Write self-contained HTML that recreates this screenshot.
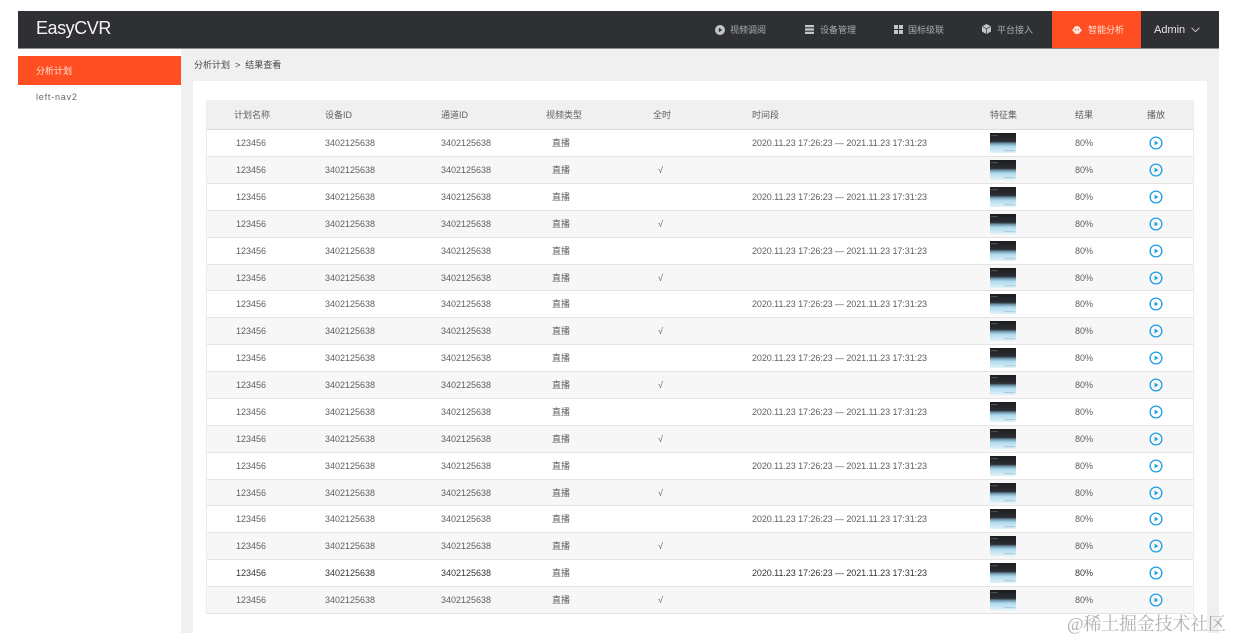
<!DOCTYPE html>
<html lang="zh">
<head>
<meta charset="utf-8">
<title>EasyCVR</title>
<style>
*{box-sizing:border-box;margin:0;padding:0}
html,body{width:1233px;height:640px;overflow:hidden;background:#fff}
body{font-family:"Liberation Sans","Noto Sans CJK SC",sans-serif;font-size:9px;color:#5f5f5f;position:relative}
#wrap{position:absolute;left:0;top:0;width:1233px;height:640px;filter:blur(.3px)}
.abs{position:absolute}
#head{left:18px;top:11px;width:1201px;height:38px;background:#2e3033;border-bottom:1px solid #8d8e8f}
#logo{left:36px;top:17px;font-size:18px;line-height:22px;color:#f4f4f4;letter-spacing:-.45px}
.nav{top:24px;line-height:12px;font-size:9px;color:#a9abad;white-space:nowrap}
#act{left:1052px;top:11px;width:89px;height:37px;background:#ff4f22}
#main{left:181px;top:49px;width:1038px;height:584px;background:#f0f0f0}
#side{left:18px;top:49px;width:163px;height:584px;background:#fff}
#sa{left:18px;top:56px;width:163px;height:29px;background:#ff4f22;color:#ffe4da;line-height:30px;padding-left:18px}
#panel{left:193px;top:81px;width:1014px;height:552px;background:#fff}
#tb{left:206px;top:100px;width:988px;border:1px solid #ececec;border-width:0 1px 0 1px}
.h{height:30.15px;background:#f0f0f0;border-bottom:1px solid #dcdcdc;position:relative}
.r{height:26.88px;position:relative;background:#fff;border-bottom:1px solid #e4e4e4}
.r:nth-child(even){background:#f7f7f7}
.h span,.r span{position:absolute;top:0;line-height:27px;white-space:nowrap}
.h span{line-height:30px}
.a{left:29px}.b{left:118px}.c{left:234px}.d{left:345px}.e{left:451px}.f{left:545px;letter-spacing:-.07px}.g{left:868px}
.ha{left:27px}.hd{left:339px}.he{left:446px}.hh{left:940px}.hg{left:783px}.hf{left:545px}
.r svg.t{position:absolute;left:783px;top:3px;width:26px;height:20px}
.r svg.p{position:absolute;left:942px;top:6px;width:14px;height:14px}
#wm{left:1067px;top:613px;font-family:"Liberation Serif","Noto Serif CJK SC",serif;font-size:18px;line-height:22px;letter-spacing:-.2px;color:rgba(150,150,150,.75);white-space:nowrap}
</style>
</head>
<body>
<svg width="0" height="0" style="position:absolute">
<defs>
<linearGradient id="tg" x1="0" y1="0" x2="0" y2="1">
<stop offset="0" stop-color="#1b1d20"/><stop offset=".42" stop-color="#2b2e33"/><stop offset=".52" stop-color="#6f95aa"/><stop offset=".66" stop-color="#aedaee"/><stop offset="1" stop-color="#e2f2f9"/>
</linearGradient>
<symbol id="th" viewBox="0 0 26 20"><rect width="26" height="20" fill="url(#tg)"/><rect x="1" y="2.5" width="7" height=".6" fill="#777"/><rect x="14" y="17.5" width="11" height=".6" fill="#8fb6ca"/></symbol>
<symbol id="pl" viewBox="0 0 14 14"><circle cx="7" cy="7" r="5.9" fill="none" stroke="#1d9ee8" stroke-width="1.3"/><path d="M5.6 4.6L9.4 7L5.6 9.4Z" fill="#1d9ee8"/></symbol>
</defs>
</svg>

<div id="wrap">
<div class="abs" id="head"></div>
<div class="abs" id="logo">EasyCVR</div>

<svg class="abs" style="left:715px;top:25px" width="10" height="10" viewBox="0 0 10 10"><circle cx="5" cy="5" r="5" fill="#c4c5c6"/><path d="M3.8 2.8L7.2 5L3.8 7.2Z" fill="#2e3033"/></svg>
<div class="abs nav" style="left:730px">视频调阅</div>
<svg class="abs" style="left:805px;top:25px" width="9" height="9" viewBox="0 0 9 9"><path d="M0 0H9V2.3H0ZM0 3.4H9V5.6H0ZM0 6.7H9V9H0Z" fill="#c4c5c6"/></svg>
<div class="abs nav" style="left:820px">设备管理</div>
<svg class="abs" style="left:894px;top:25px" width="9" height="9" viewBox="0 0 9 9"><path d="M0 0H4V4H0ZM5 0H9V4H5ZM0 5H4V9H0ZM5 5H9V9H5Z" fill="#c4c5c6"/></svg>
<div class="abs nav" style="left:908px">国标级联</div>
<svg class="abs" style="left:982px;top:24px" width="9" height="10" viewBox="0 0 9 10"><path d="M4.5 0L9 2.4V7.6L4.5 10L0 7.6V2.4Z" fill="#c4c5c6"/><path d="M0.5 2.6L4.5 4.9L8.5 2.6M4.5 4.9V9.8" fill="none" stroke="#2e3033" stroke-width=".7"/></svg>
<div class="abs nav" style="left:997px">平台接入</div>

<div class="abs" id="act"></div>
<svg class="abs" style="left:1072px;top:25px" width="10" height="10" viewBox="0 0 10 10"><rect x=".4" y="4" width="9.2" height="2.6" rx="1.2" fill="#ffe9e2"/><rect x="1.6" y="1" width="6.8" height="8" rx="3.2" fill="#ffe9e2"/><circle cx="3.7" cy="4.8" r=".7" fill="#ff4f22"/><circle cx="6.3" cy="4.8" r=".7" fill="#ff4f22"/></svg>
<div class="abs nav" style="left:1088px;color:#ffe4da">智能分析</div>
<div class="abs" style="left:1154px;top:23px;font-size:11px;line-height:14px;color:#e6e6e6">Admin</div>
<svg class="abs" style="left:1191px;top:27px" width="9" height="6" viewBox="0 0 9 6"><path d="M.6 .8L4.5 4.6L8.4 .8" fill="none" stroke="#c8c9ca" stroke-width="1"/></svg>

<div class="abs" id="main"></div>
<div class="abs" id="side"></div>
<div class="abs" id="sa">分析计划</div>
<div class="abs" style="left:36px;top:91px;line-height:12px;letter-spacing:.8px;color:#666">left-nav2</div>
<div class="abs" style="left:194px;top:59px;line-height:12px;color:#444;white-space:nowrap">分析计划 &nbsp;&gt;&nbsp; 结果查看</div>
<div class="abs" id="panel"></div>

<div class="abs" id="tb">
<div class="h"><span class="ha">计划名称</span><span class="b">设备ID</span><span class="c">通道ID</span><span class="hd">视频类型</span><span class="he">全时</span><span class="hf">时间段</span><span class="hg">特征集</span><span class="g">结果</span><span class="hh">播放</span></div>
<div>
<div class="r"><span class="a">123456</span><span class="b">3402125638</span><span class="c">3402125638</span><span class="d">直播</span><span class="f">2020.11.23 17:26:23 — 2021.11.23 17:31:23</span><svg class="t"><use href="#th"/></svg><span class="g">80%</span><svg class="p"><use href="#pl"/></svg></div>
<div class="r"><span class="a">123456</span><span class="b">3402125638</span><span class="c">3402125638</span><span class="d">直播</span><span class="e">√</span><svg class="t"><use href="#th"/></svg><span class="g">80%</span><svg class="p"><use href="#pl"/></svg></div>
<div class="r"><span class="a">123456</span><span class="b">3402125638</span><span class="c">3402125638</span><span class="d">直播</span><span class="f">2020.11.23 17:26:23 — 2021.11.23 17:31:23</span><svg class="t"><use href="#th"/></svg><span class="g">80%</span><svg class="p"><use href="#pl"/></svg></div>
<div class="r"><span class="a">123456</span><span class="b">3402125638</span><span class="c">3402125638</span><span class="d">直播</span><span class="e">√</span><svg class="t"><use href="#th"/></svg><span class="g">80%</span><svg class="p"><use href="#pl"/></svg></div>
<div class="r"><span class="a">123456</span><span class="b">3402125638</span><span class="c">3402125638</span><span class="d">直播</span><span class="f">2020.11.23 17:26:23 — 2021.11.23 17:31:23</span><svg class="t"><use href="#th"/></svg><span class="g">80%</span><svg class="p"><use href="#pl"/></svg></div>
<div class="r"><span class="a">123456</span><span class="b">3402125638</span><span class="c">3402125638</span><span class="d">直播</span><span class="e">√</span><svg class="t"><use href="#th"/></svg><span class="g">80%</span><svg class="p"><use href="#pl"/></svg></div>
<div class="r"><span class="a">123456</span><span class="b">3402125638</span><span class="c">3402125638</span><span class="d">直播</span><span class="f">2020.11.23 17:26:23 — 2021.11.23 17:31:23</span><svg class="t"><use href="#th"/></svg><span class="g">80%</span><svg class="p"><use href="#pl"/></svg></div>
<div class="r"><span class="a">123456</span><span class="b">3402125638</span><span class="c">3402125638</span><span class="d">直播</span><span class="e">√</span><svg class="t"><use href="#th"/></svg><span class="g">80%</span><svg class="p"><use href="#pl"/></svg></div>
<div class="r"><span class="a">123456</span><span class="b">3402125638</span><span class="c">3402125638</span><span class="d">直播</span><span class="f">2020.11.23 17:26:23 — 2021.11.23 17:31:23</span><svg class="t"><use href="#th"/></svg><span class="g">80%</span><svg class="p"><use href="#pl"/></svg></div>
<div class="r"><span class="a">123456</span><span class="b">3402125638</span><span class="c">3402125638</span><span class="d">直播</span><span class="e">√</span><svg class="t"><use href="#th"/></svg><span class="g">80%</span><svg class="p"><use href="#pl"/></svg></div>
<div class="r"><span class="a">123456</span><span class="b">3402125638</span><span class="c">3402125638</span><span class="d">直播</span><span class="f">2020.11.23 17:26:23 — 2021.11.23 17:31:23</span><svg class="t"><use href="#th"/></svg><span class="g">80%</span><svg class="p"><use href="#pl"/></svg></div>
<div class="r"><span class="a">123456</span><span class="b">3402125638</span><span class="c">3402125638</span><span class="d">直播</span><span class="e">√</span><svg class="t"><use href="#th"/></svg><span class="g">80%</span><svg class="p"><use href="#pl"/></svg></div>
<div class="r"><span class="a">123456</span><span class="b">3402125638</span><span class="c">3402125638</span><span class="d">直播</span><span class="f">2020.11.23 17:26:23 — 2021.11.23 17:31:23</span><svg class="t"><use href="#th"/></svg><span class="g">80%</span><svg class="p"><use href="#pl"/></svg></div>
<div class="r"><span class="a">123456</span><span class="b">3402125638</span><span class="c">3402125638</span><span class="d">直播</span><span class="e">√</span><svg class="t"><use href="#th"/></svg><span class="g">80%</span><svg class="p"><use href="#pl"/></svg></div>
<div class="r"><span class="a">123456</span><span class="b">3402125638</span><span class="c">3402125638</span><span class="d">直播</span><span class="f">2020.11.23 17:26:23 — 2021.11.23 17:31:23</span><svg class="t"><use href="#th"/></svg><span class="g">80%</span><svg class="p"><use href="#pl"/></svg></div>
<div class="r"><span class="a">123456</span><span class="b">3402125638</span><span class="c">3402125638</span><span class="d">直播</span><span class="e">√</span><svg class="t"><use href="#th"/></svg><span class="g">80%</span><svg class="p"><use href="#pl"/></svg></div>
<div class="r"><span class="a" style="color:#333">123456</span><span class="b" style="color:#333">3402125638</span><span class="c" style="color:#333">3402125638</span><span class="d">直播</span><span class="f" style="color:#333">2020.11.23 17:26:23 — 2021.11.23 17:31:23</span><svg class="t"><use href="#th"/></svg><span class="g" style="color:#333">80%</span><svg class="p"><use href="#pl"/></svg></div>
<div class="r"><span class="a">123456</span><span class="b">3402125638</span><span class="c">3402125638</span><span class="d">直播</span><span class="e">√</span><svg class="t"><use href="#th"/></svg><span class="g">80%</span><svg class="p"><use href="#pl"/></svg></div>
</div>
</div>

<div class="abs" id="wm">@稀土掘金技术社区</div>
</div>
</body>
</html>
